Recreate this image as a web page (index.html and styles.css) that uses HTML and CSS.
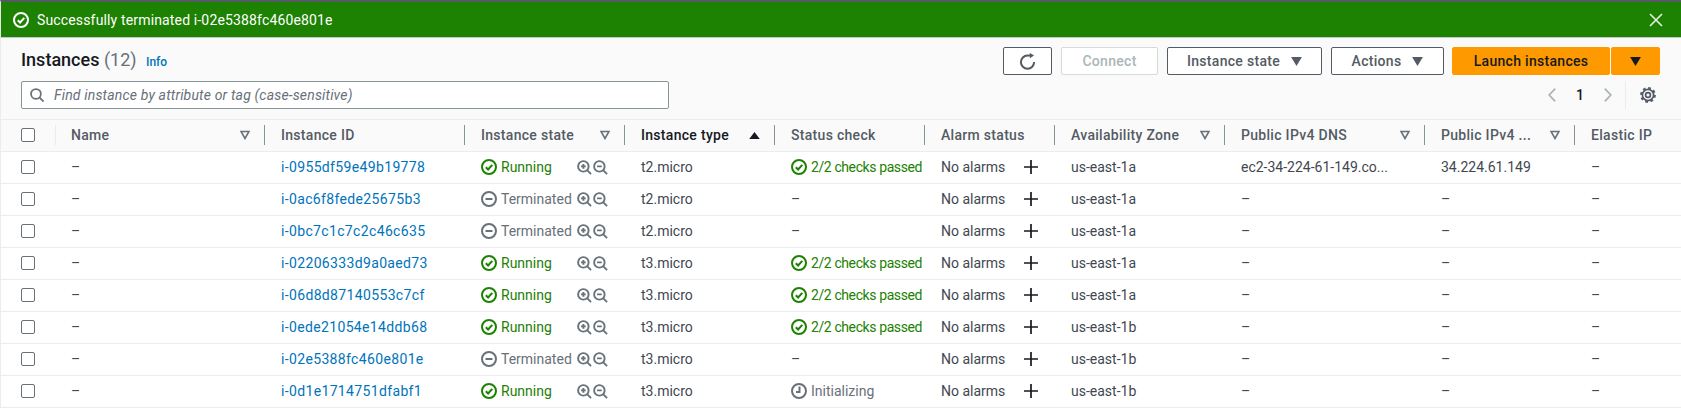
FILE: index.html
```html
<!DOCTYPE html>
<html lang="en">
<head>
    <meta charset="UTF-8">
    <title>Instances</title>
    <link rel="stylesheet" href="styles.css">
</head>
<body>
    <svg class="defs" width="0" height="0">
        <symbol id="ok" viewBox="0 0 16 16"><circle cx="8" cy="8" r="7" fill="none" stroke="currentColor" stroke-width="2"/><path d="M4.8 8.2l2.3 2.3 4.2-4.6" fill="none" stroke="currentColor" stroke-width="2"/></symbol>
        <symbol id="stop" viewBox="0 0 16 16"><circle cx="8" cy="8" r="7" fill="none" stroke="currentColor" stroke-width="2"/><path d="M4.5 8h7" fill="none" stroke="currentColor" stroke-width="2"/></symbol>
        <symbol id="clock" viewBox="0 0 16 16"><circle cx="8" cy="8" r="7" fill="none" stroke="currentColor" stroke-width="2"/><path d="M8.5 3.5V9H5" fill="none" stroke="currentColor" stroke-width="2"/></symbol>
        <symbol id="zin" viewBox="0 0 16 16"><circle cx="6.8" cy="6.8" r="5.6" fill="none" stroke="currentColor" stroke-width="2"/><path d="M11 11l4 4M4.3 6.8h5M6.8 4.3v5" fill="none" stroke="currentColor" stroke-width="2"/></symbol>
        <symbol id="zout" viewBox="0 0 16 16"><circle cx="6.8" cy="6.8" r="5.6" fill="none" stroke="currentColor" stroke-width="2"/><path d="M11 11l4 4M4.3 6.8h5" fill="none" stroke="currentColor" stroke-width="2"/></symbol>
        <symbol id="plus" viewBox="0 0 14 14"><path d="M7 0v14M0 7h14" fill="none" stroke="currentColor" stroke-width="1.7"/></symbol>
        <symbol id="filter" viewBox="0 0 10 10"><path d="M1 1.5h8L5 8.5z" fill="none" stroke="currentColor" stroke-width="1.6"/></symbol>
        <symbol id="caret" viewBox="0 0 12 10"><path d="M0 0h12L6 10z" fill="currentColor"/></symbol>
        <symbol id="caret-up" viewBox="0 0 12 8"><path d="M0 8h12L6 0z" fill="currentColor"/></symbol>
    </svg>

    <div class="flash">
        <div class="flash-msg">
            <svg class="ico16"><use href="#ok"/></svg>
            <span>Successfully terminated i-02e5388fc460e801e</span>
        </div>
        <svg class="flash-close" viewBox="0 0 14 14"><path d="M1 1l12 12M13 1L1 13" fill="none" stroke="currentColor" stroke-width="1.6"/></svg>
    </div>

    <div class="panel">
        <div class="panel-head">
            <div class="head-left">
                <h1>Instances <span class="count">(12)</span> <a class="info">Info</a></h1>
                <div class="search">
                    <svg class="search-ico" viewBox="0 0 16 16"><circle cx="6.8" cy="6.8" r="5.6" fill="none" stroke="currentColor" stroke-width="2"/><path d="M11 11l4.5 4.5" fill="none" stroke="currentColor" stroke-width="2"/></svg>
                    <span>Find instance by attribute or tag (case-sensitive)</span>
                </div>
            </div>
            <div class="head-right">
                <div class="actions">
                    <button class="btn btn-icon"><svg class="refresh" viewBox="0 0 16 16"><path d="M14.2 8.5A6.2 6.2 0 1 1 8 2.4h3" fill="none" stroke="currentColor" stroke-width="1.9"/><path d="M10.2 0l4 2.4-4 2.6z" fill="currentColor"/></svg></button>
                    <button class="btn btn-off">Connect</button>
                    <button class="btn btn-state">Instance state <svg class="btn-caret"><use href="#caret"/></svg></button>
                    <button class="btn btn-actions">Actions <svg class="btn-caret"><use href="#caret"/></svg></button>
                    <div class="split">
                        <button class="btn btn-launch">Launch instances</button>
                        <button class="btn btn-drop"><svg class="btn-caret"><use href="#caret"/></svg></button>
                    </div>
                </div>
                <div class="pager">
                    <svg class="chev" viewBox="0 0 8 14"><path d="M7.2 .7L1.2 7l6 6.3" fill="none" stroke="currentColor" stroke-width="1.8"/></svg>
                    <span class="page">1</span>
                    <svg class="chev" viewBox="0 0 8 14"><path d="M.8 .7l6 6.3-6 6.3" fill="none" stroke="currentColor" stroke-width="1.8"/></svg>
                    <span class="pager-sep"></span>
                    <svg class="ico16 gear" viewBox="0 0 16 16"><circle cx="8" cy="8" r="2.4" fill="none" stroke="currentColor" stroke-width="1.7"/><circle cx="8" cy="8" r="5.6" fill="none" stroke="currentColor" stroke-width="1.7"/><circle cx="8" cy="8" r="6.8" fill="none" stroke="currentColor" stroke-width="2.2" stroke-dasharray="2.67 2.67"/></svg>
                </div>
            </div>
        </div>

        <table>
            <colgroup>
                <col class="c-check"><col class="c-name"><col class="c-id"><col class="c-state"><col class="c-type">
                <col class="c-status"><col class="c-alarm"><col class="c-zone"><col class="c-dns"><col class="c-ip"><col>
            </colgroup>
            <thead>
                <tr>
                    <th class="check"><i class="box"></i></th>
                    <th class="first"><div class="th">Name <svg class="filter"><use href="#filter"/></svg></div></th>
                    <th><div class="th">Instance ID</div></th>
                    <th><div class="th">Instance state <svg class="filter"><use href="#filter"/></svg></div></th>
                    <th class="sorted"><div class="th">Instance type <svg class="sort"><use href="#caret-up"/></svg></div></th>
                    <th><div class="th">Status check</div></th>
                    <th><div class="th">Alarm status</div></th>
                    <th><div class="th">Availability Zone <svg class="filter"><use href="#filter"/></svg></div></th>
                    <th><div class="th">Public IPv4 DNS <svg class="filter"><use href="#filter"/></svg></div></th>
                    <th><div class="th">Public IPv4 ... <svg class="filter"><use href="#filter"/></svg></div></th>
                    <th><div class="th">Elastic IP</div></th>
                </tr>
            </thead>
            <tbody id="rows"></tbody>
        </table>
    </div>

    <script>
        const rows = [
            ["i-0955df59e49b19778", "run", "t2.micro", "ok", "us-east-1a", "ec2-34-224-61-149.co...", "34.224.61.149"],
            ["i-0ac6f8fede25675b3", "term", "t2.micro", "", "us-east-1a", "–", "–"],
            ["i-0bc7c1c7c2c46c635", "term", "t2.micro", "", "us-east-1a", "–", "–"],
            ["i-02206333d9a0aed73", "run", "t3.micro", "ok", "us-east-1a", "–", "–"],
            ["i-06d8d87140553c7cf", "run", "t3.micro", "ok", "us-east-1a", "–", "–"],
            ["i-0ede21054e14ddb68", "run", "t3.micro", "ok", "us-east-1b", "–", "–"],
            ["i-02e5388fc460e801e", "term", "t3.micro", "", "us-east-1b", "–", "–"],
            ["i-0d1e1714751dfabf1", "run", "t3.micro", "init", "us-east-1b", "–", "–"]
        ];

        function use(id, cls) {
            return `<svg class="${cls}"><use href="#${id}"/></svg>`;
        }

        function stateCell(state) {
            const label = state === "run" ? "Running" : "Terminated";
            const icon = state === "run" ? "ok" : "stop";
            return `<div class="state ${state}"><span class="state-label">${use(icon, "ico16")}${label}</span>`
                + `<span class="zoom">${use("zin", "zoom-ico")}${use("zout", "zoom-ico")}</span></div>`;
        }

        function statusCell(status) {
            if (status === "ok") return `<span class="status run">${use("ok", "ico16")}2/2 checks passed</span>`;
            if (status === "init") return `<span class="status wait">${use("clock", "ico16")}Initializing</span>`;
            return "–";
        }

        document.getElementById("rows").innerHTML = rows.map(r => `
            <tr>
                <td class="check"><i class="box"></i></td>
                <td class="first">–</td>
                <td><a class="link">${r[0]}</a></td>
                <td>${stateCell(r[1])}</td>
                <td>${r[2]}</td>
                <td>${statusCell(r[3])}</td>
                <td><div class="alarm">No alarms ${use("plus", "plus")}</div></td>
                <td>${r[4]}</td>
                <td>${r[5]}</td>
                <td>${r[6]}</td>
                <td>–</td>
            </tr>`).join("");
    </script>
</body>
</html>
```

FILE: styles.css
```css
* {
    box-sizing: border-box;
}

html, body {
    height: 100%;
    overflow: hidden;
}

body {
    margin: 0;
    background-color: #fff;
    color: #16191f;
    font-family: Roboto, "Liberation Sans", sans-serif;
    font-size: 14px;
}

.defs {
    position: absolute;
}

.ico16 {
    width: 16px;
    height: 16px;
    flex: none;
}

.flash {
    display: flex;
    align-items: center;
    justify-content: space-between;
    height: 38px;
    padding: 0 18px 0 12px;
    border-top: 2px solid #545b64;
    border-left: 1px solid #eaeded;
    border-bottom: 1px solid #c6c6cd;
    background-color: #1d8102;
    color: #fff;
}

.flash-msg {
    display: flex;
    align-items: center;
    gap: 8px;
    letter-spacing: .15px;
}

.flash-close {
    width: 14px;
    height: 14px;
    color: #e6efe2;
}

.panel {
    border-left: 1px solid #eaeded;
}

.panel-head {
    display: flex;
    justify-content: space-between;
    height: 82px;
    padding: 9px 21px 0 20px;
    background-color: #fafafa;
    border-bottom: 1px solid #eaeded;
}

h1 {
    height: 24px;
    margin: 1px 0 9px;
    font-size: 18px;
    font-weight: 500;
    line-height: 24px;
}

.count {
    color: #687078;
    font-weight: 400;
}

.info {
    margin-left: 5px;
    color: #0073bb;
    font-size: 12px;
    font-weight: 500;
}

.search {
    display: flex;
    align-items: center;
    gap: 10px;
    width: 648px;
    height: 28px;
    padding-left: 8px;
    background-color: #fff;
    border: 1px solid #879596;
    border-radius: 2px;
    color: #687078;
    font-style: italic;
    letter-spacing: .17px;
}

.search-ico {
    width: 14px;
    height: 14px;
}

.head-right {
    display: flex;
    flex-direction: column;
    align-items: flex-end;
}

.actions {
    display: flex;
    gap: 9px;
}

.btn {
    display: flex;
    align-items: center;
    justify-content: center;
    gap: 11px;
    height: 28px;
    padding: 0;
    background-color: #fff;
    border: 1px solid #545b64;
    border-radius: 2px;
    color: #545b64;
    font: 500 14px Roboto, "Liberation Sans", sans-serif;
    letter-spacing: .3px;
}

.btn-icon {
    width: 49px;
}

.refresh {
    width: 17px;
    height: 17px;
}

.btn-off {
    width: 97px;
    border-color: #d5dbdb;
    color: #aab7b8;
}

.btn-state {
    width: 155px;
}

.btn-actions {
    width: 113px;
}

.btn-caret {
    width: 11px;
    height: 9px;
}

.split {
    display: flex;
    gap: 1px;
    margin-left: -1px;
}

.btn-launch,
.btn-drop {
    background-color: #ff9900;
    border-color: #ff9900;
    color: #16191f;
}

.btn-launch {
    width: 158px;
}

.btn-drop {
    width: 49px;
}

.pager {
    display: flex;
    align-items: center;
    height: 28px;
    margin-top: 6px;
    color: #aab7b8;
}

.chev {
    width: 8px;
    height: 14px;
}

.page {
    width: 48px;
    color: #16191f;
    font-weight: 500;
    text-align: center;
}

.pager-sep {
    height: 28px;
    margin: 0 14px 0 13px;
    border-left: 1px solid #eaeded;
}

.gear {
    margin-right: 4px;
    color: #545b64;
}

table {
    width: 100%;
    border-collapse: collapse;
    table-layout: fixed;
}

.c-check { width: 54px; }
.c-name { width: 209px; }
.c-id { width: 200px; }
.c-state { width: 160px; }
.c-type { width: 150px; }
.c-status { width: 150px; }
.c-alarm { width: 130px; }
.c-zone { width: 170px; }
.c-dns { width: 200px; }
.c-ip { width: 150px; }

th {
    height: 31px;
    padding: 0;
    background-color: #fafafa;
    border-bottom: 1px solid #eaeded;
    color: #545b64;
    font-weight: 500;
    letter-spacing: .3px;
    text-align: left;
}

.th {
    display: flex;
    align-items: center;
    justify-content: space-between;
    height: 20px;
    padding: 0 14px 0 16px;
    border-left: 1px solid #879596;
}

th.first .th {
    padding-left: 15px;
    border-left-color: #eaeded;
}

th.sorted {
    color: #16191f;
}

.filter {
    width: 10px;
    height: 10px;
    color: #687078;
}

.sort {
    width: 11px;
    height: 7px;
}

td {
    height: 32px;
    padding: 0 0 0 17px;
    background-color: #fff;
    border-bottom: 1px solid #eaeded;
    color: #414750;
    white-space: nowrap;
    overflow: hidden;
}

td.first {
    padding-left: 16px;
}

.check {
    padding: 0 0 0 20px;
}

.box {
    display: block;
    width: 14px;
    height: 14px;
    background-color: #fff;
    border: 1px solid #687078;
    border-radius: 2px;
}

.link {
    color: #0073bb;
    letter-spacing: .35px;
}

.state {
    display: flex;
    align-items: center;
    justify-content: space-between;
    width: 127px;
}

.state-label,
.status {
    display: flex;
    align-items: center;
    gap: 4px;
}

.status.run {
    letter-spacing: -.4px;
}

.run {
    color: #1d8102;
}

.term,
.wait {
    color: #687078;
}

.zoom {
    display: flex;
    gap: 1px;
    color: #687078;
}

.zoom-ico {
    width: 15px;
    height: 15px;
}

.alarm {
    display: flex;
    align-items: center;
    gap: 19px;
}

.plus {
    width: 14px;
    height: 14px;
    color: #16191f;
}
```
